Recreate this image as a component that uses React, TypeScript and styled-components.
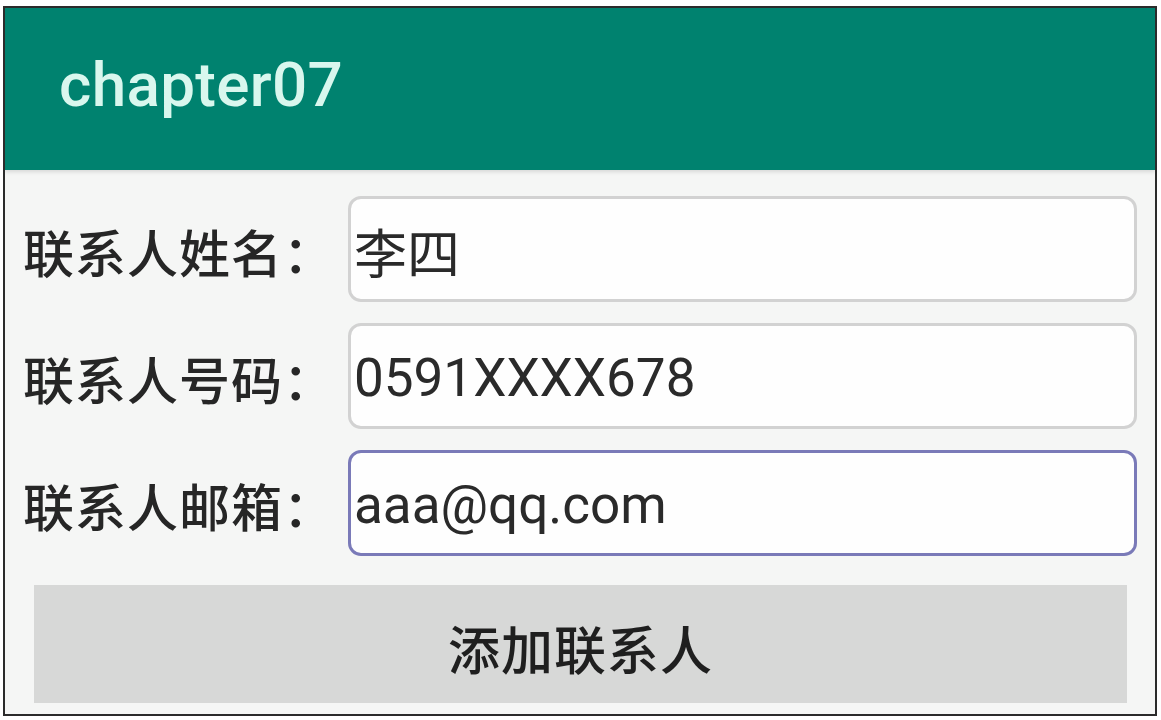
import styled, { createGlobalStyle } from "styled-components";

const GlobalStyle = createGlobalStyle`
  html, body {
    margin: 0;
    padding: 0;
    background: #ffffff;
  }
  body {
    font-family: Roboto, "Noto Sans CJK SC", sans-serif;
  }
`;

type Field = {
  label: string;
  value: string;
  focused?: boolean;
};

const fields: Field[] = [
  { label: "联系人姓名：", value: "李四" },
  { label: "联系人号码：", value: "0591XXXX678" },
  { label: "联系人邮箱：", value: "aaa@qq.com", focused: true },
];

const App = () => {
  return (
    <>
      <GlobalStyle />
      <Page>
        <Frame>
          <AppBar>
            <Title>chapter07</Title>
          </AppBar>
          <Form>
            {fields.map((f) => (
              <Row key={f.label}>
                <Label>{f.label}</Label>
                <Input focused={!!f.focused}>{f.value}</Input>
              </Row>
            ))}
            <AddButton>添加联系人</AddButton>
          </Form>
        </Frame>
      </Page>
    </>
  );
};

export default App;

const Page = styled.div`
  width: 1161px;
  height: 720px;
  padding: 6px 4px 4px 3px;
  box-sizing: border-box;
`;

const Frame = styled.div`
  width: 1154px;
  height: 710px;
  box-sizing: border-box;
  border: 2px solid #2b2b2b;
  background: #f5f6f5;
  display: flex;
  flex-direction: column;
  overflow: hidden;
`;

const AppBar = styled.div`
  height: 162px;
  background: #00826f;
  display: flex;
  align-items: center;
  padding-left: 54px;
  box-shadow: 0 2px 4px rgba(0, 0, 0, 0.12);
`;

const Title = styled.div`
  color: #d9f7ee;
  font-family: Roboto, sans-serif;
  font-weight: 500;
  font-size: 62px;
  letter-spacing: 0.3px;
  margin-top: -10px;
`;

const Form = styled.div`
  display: flex;
  flex-direction: column;
  padding: 26px 18px 0 18px;
`;

const Row = styled.div`
  display: flex;
  align-items: center;
  height: 106px;
  margin-bottom: 21px;
`;

const Label = styled.div`
  width: 325px;
  flex-shrink: 0;
  white-space: nowrap;
  color: #262626;
  font-size: 51px;
  font-weight: 500;
  font-family: "Noto Sans CJK SC", sans-serif;
  letter-spacing: 1px;
  margin-top: 4px;
`;

const Input = styled.div<{ focused: boolean }>`
  flex: 1;
  height: 100%;
  box-sizing: border-box;
  border: ${({ focused }) => (focused ? "3px solid #7a7ab8" : "3px solid #d2d2d2")};
  border-radius: 13px;
  background: #fefefe;
  display: flex;
  align-items: center;
  padding-left: 3px;
  padding-top: 4px;
  color: #2a2a2a;
  font-size: 53px;
  font-family: Roboto, "Noto Sans CJK SC", sans-serif;
`;

const AddButton = styled.div`
  margin: 8px 10px 0 11px;
  height: 118px;
  background: #d7d8d7;
  display: flex;
  align-items: center;
  justify-content: center;
  padding-top: 6px;
  box-sizing: border-box;
  color: #1f1f1f;
  font-size: 52px;
  font-weight: 500;
  font-family: "Noto Sans CJK SC", sans-serif;
  letter-spacing: 1px;
`;
